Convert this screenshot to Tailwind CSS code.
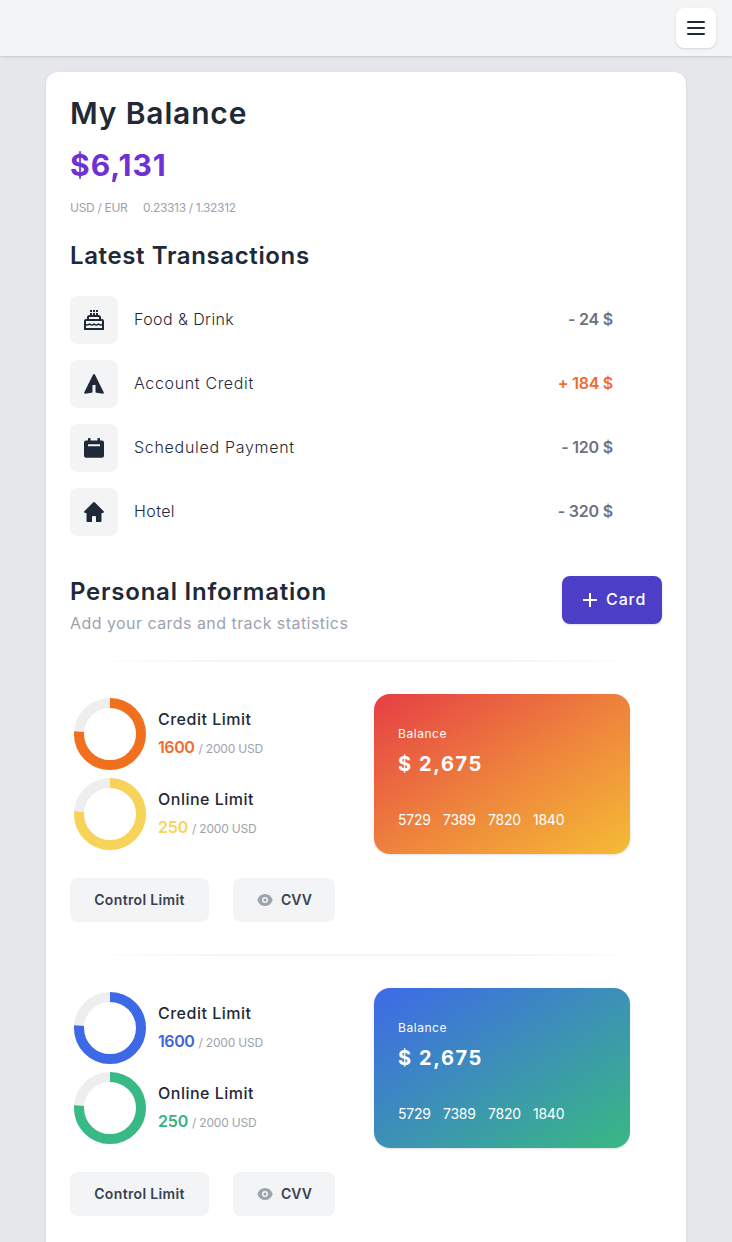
<!DOCTYPE html>
<html lang="en">
<head>
<meta charset="utf-8">
<meta name="viewport" content="width=device-width, initial-scale=1">
<title>My Balance</title>
<script src="https://cdn.jsdelivr.net/npm/@tailwindcss/browser@4"></script>
</head>
<body class="h-[1242px] overflow-hidden bg-[#e5e7eb] font-[Inter,sans-serif] text-[#1f2937]">
<header class="flex h-14 items-center justify-end bg-[#f3f4f6] px-4 shadow">
  <button class="flex size-10 items-center justify-center rounded-lg bg-white shadow">
    <svg class="size-6" viewBox="0 0 24 24" fill="none" stroke="#1f2937" stroke-width="2" stroke-linecap="round"><path d="M4 6h16M4 12h16M4 18h16"/></svg>
  </button>
</header>
<main class="mx-auto mt-4 h-[1170px] w-[640px] rounded-t-xl bg-white p-6 shadow">
  <h1 class="-mt-px text-[30px] leading-9 font-semibold tracking-[0.85px] whitespace-nowrap">My Balance</h1>
  <p class="mt-4 text-[30px] leading-9 font-bold tracking-[1px] text-[#6d31d4]">$6,131</p>
  <div class="mt-[17px] flex gap-4 text-xs leading-4 text-[#9ca3af]">
    <span class="w-[57px] tracking-[-0.3px] whitespace-nowrap">USD / EUR</span><span class="tracking-[-0.35px]">0.23313 / 1.32312</span>
  </div>
  <h2 class="mt-6 text-2xl leading-8 font-semibold tracking-[0.62px]">Latest Transactions</h2>
  <ul class="mt-6 flex flex-col gap-4 pr-[49px]">
    <li class="flex items-center">
      <span class="flex size-12 items-center justify-center rounded-lg bg-[#f3f4f6]">
        <svg class="size-6" viewBox="0 0 24 24" fill="none" stroke="#1f2937" stroke-width="2"><path d="M3 21V13q0-1 1-1h16q1 0 1 1v8zM6 12v-2.500Q6 8 7.500 8h9q1.500 0 1.500 1.500V12M9 5v3M12 5v3M15 5v3M9 2v2M12 2v2M15 2v2"/><path stroke-width="1.500" d="M3 16q2.250 2 4.500 0 2.250 2 4.500 0 2.250 2 4.500 0 2.250 2 4.500 0"/></svg>
      </span>
      <span class="-mt-0.5 ml-4 font-light tracking-[0.4px]">Food &amp; Drink</span><span class="-mt-0.5 ml-auto font-semibold tracking-[-0.2px] text-[#6b7280]">- 24 $</span>
    </li>
    <li class="flex items-center">
      <span class="flex size-12 items-center justify-center rounded-lg bg-[#f3f4f6]">
        <svg class="size-6" viewBox="0 0 24 24" fill="#1f2937"><path d="M12.900 2.600q-.9-1.200-1.800 0L2.200 20.500q-.3 1.100.8 1.300l6.500-1q1-.2 1-1V13h3v6.800q0 .8 1 1l6.500 1q1.100-.2.800-1.300z"/></svg>
      </span>
      <span class="-mt-0.5 ml-4 font-light tracking-[0.65px]">Account Credit</span><span class="-mt-0.5 ml-auto font-semibold tracking-[-0.25px] text-[#f26a2e]">+ 184 $</span>
    </li>
    <li class="flex items-center">
      <span class="flex size-12 items-center justify-center rounded-lg bg-[#f3f4f6]">
        <svg class="size-6" viewBox="0 0 24 24" fill="#1f2937"><path fill-rule="evenodd" d="M6 4.500V2.800q0-.8.800-.8h.9q.8 0 .8.800v1.700h7V2.800q0-.8.800-.8h.9q.8 0 .8.800v1.700H20q2 0 2 2v13.200q0 2-2 2H4q-2 0-2-2V6.500q0-2 2-2zM6 8.300v2h12v-2z"/></svg>
      </span>
      <span class="-mt-0.5 ml-4 font-light tracking-[0.7px]">Scheduled Payment</span><span class="-mt-0.5 ml-auto font-semibold tracking-[-0.2px] text-[#6b7280]">- 120 $</span>
    </li>
    <li class="flex items-center">
      <span class="flex size-12 items-center justify-center rounded-lg bg-[#f3f4f6]">
        <svg class="size-6" viewBox="0 0 24 24" fill="#1f2937"><path d="m12.700 2.300 9 9q.6.700-.5 1.700h-1.700v8q0 1-1 1H14v-5q0-1-1-1h-2q-1 0-1 1v5H5.500q-1 0-1-1v-8H2.800q-1.100-1-.5-1.700l9-9q.7-.6 1.400 0z"/></svg>
      </span>
      <span class="-mt-0.5 ml-4 font-light tracking-[0.4px]">Hotel</span><span class="-mt-0.5 ml-auto font-semibold tracking-[-0.2px] text-[#6b7280]">- 320 $</span>
    </li>
  </ul>
  <section class="mt-10 flex items-start justify-between">
    <div>
      <h2 class="text-2xl leading-8 font-semibold tracking-[0.77px]">Personal Information</h2>
      <p class="mt-[3px] mb-px leading-6 tracking-[0.45px] text-[#9ca3af]">Add your cards and track statistics</p>
    </div>
    <button class="flex h-12 w-[100px] items-center rounded-lg bg-[#4c3ec6] pl-4 text-white shadow">
      <svg class="mr-1 size-6" viewBox="0 0 24 24" fill="none" stroke="#fff" stroke-width="2"><path d="M12 5v14M5 12h14"/></svg>
      <span class="-mt-0.5 font-medium tracking-[0.9px]">Card</span>
    </button>
  </section>
  <hr class="mt-6 h-0.5 border-0 bg-[linear-gradient(90deg,#fff_2%,#f4f4f5_28%,#f4f4f5_72%,#fff_98%)]">
  <section class="mt-8 flex h-40">
    <div class="flex w-[304px] flex-col gap-2 py-1 pl-1">
      <div class="flex h-[72px]">
        <svg class="size-[72px]" viewBox="0 0 72 72" fill="none" stroke-width="10"><circle cx="36" cy="36" r="31" stroke="#eee"/><circle cx="36" cy="36" r="31" stroke="#f07020" pathLength="100" stroke-dasharray="76.2 100" transform="rotate(-90 36 36)"/></svg>
        <div class="ml-3 pt-[9px]">
          <h3 class="leading-6 font-medium tracking-[0.5px]">Credit Limit</h3>
          <p class="mt-1 leading-6 whitespace-nowrap"><span class="font-semibold tracking-[-0.4px] text-[#f26a2e]">1600</span><span class="ml-1 text-xs tracking-[-0.2px] text-[#9ca3af]">/ 2000 USD</span></p>
        </div>
      </div>
      <div class="flex h-[72px]">
        <svg class="size-[72px]" viewBox="0 0 72 72" fill="none" stroke-width="10"><circle cx="36" cy="36" r="31" stroke="#eee"/><circle cx="36" cy="36" r="31" stroke="#f8d35a" pathLength="100" stroke-dasharray="76.2 100" transform="rotate(-90 36 36)"/></svg>
        <div class="ml-3 pt-[9px]">
          <h3 class="leading-6 font-medium tracking-[0.5px]">Online Limit</h3>
          <p class="mt-1 leading-6 whitespace-nowrap"><span class="font-semibold tracking-[-0.2px] text-[#f8d35a]">250</span><span class="ml-1 text-xs tracking-[-0.2px] text-[#9ca3af]">/ 2000 USD</span></p>
        </div>
      </div>
    </div>
    <div class="h-40 w-64 rounded-2xl bg-[linear-gradient(to_bottom_right,#e53e45,#ee813d_50%,#f5bc35)] px-6 pt-8 text-white shadow">
      <p class="text-xs leading-4 tracking-[0.55px]">Balance</p>
      <p class="mt-2 text-xl leading-7 font-bold tracking-[1.6px]">$ 2,675</p>
      <p class="mt-8 flex gap-3 text-sm leading-5 tracking-[-0.25px]"><span class="w-[33px]">5729</span><span class="w-[33px]">7389</span><span class="w-[33px]">7820</span><span>1840</span></p>
    </div>
  </section>
  <div class="mt-6 flex gap-6 text-sm font-semibold text-[#374151]">
    <button class="h-11 w-[139px] rounded-lg bg-[#f3f4f6] tracking-[0.35px] whitespace-nowrap">Control Limit</button>
    <button class="flex h-11 w-[102px] items-center rounded-lg bg-[#f3f4f6] pl-6">
      <svg class="mr-2 size-4" viewBox="0 0 16 16"><path fill="#9ca3af" d="M.300 8Q2.500 2 8 2t7.700 6Q13.500 14 8 14T.300 8z"/><circle cx="8" cy="8" r="2.300" fill="#9ca3af" stroke="#f3f4f6" stroke-width="1.500"/></svg>CVV
    </button>
  </div>
  <hr class="mt-8 h-0.5 border-0 bg-[linear-gradient(90deg,#fff_2%,#f4f4f5_28%,#f4f4f5_72%,#fff_98%)]">
  <section class="mt-8 flex h-40">
    <div class="flex w-[304px] flex-col gap-2 py-1 pl-1">
      <div class="flex h-[72px]">
        <svg class="size-[72px]" viewBox="0 0 72 72" fill="none" stroke-width="10"><circle cx="36" cy="36" r="31" stroke="#eee"/><circle cx="36" cy="36" r="31" stroke="#3e69e6" pathLength="100" stroke-dasharray="76.2 100" transform="rotate(-90 36 36)"/></svg>
        <div class="ml-3 pt-[9px]">
          <h3 class="leading-6 font-medium tracking-[0.5px]">Credit Limit</h3>
          <p class="mt-1 leading-6 whitespace-nowrap"><span class="font-semibold tracking-[-0.4px] text-[#3e62df]">1600</span><span class="ml-1 text-xs tracking-[-0.2px] text-[#9ca3af]">/ 2000 USD</span></p>
        </div>
      </div>
      <div class="flex h-[72px]">
        <svg class="size-[72px]" viewBox="0 0 72 72" fill="none" stroke-width="10"><circle cx="36" cy="36" r="31" stroke="#eee"/><circle cx="36" cy="36" r="31" stroke="#38b985" pathLength="100" stroke-dasharray="76.2 100" transform="rotate(-90 36 36)"/></svg>
        <div class="ml-3 pt-[9px]">
          <h3 class="leading-6 font-medium tracking-[0.5px]">Online Limit</h3>
          <p class="mt-1 leading-6 whitespace-nowrap"><span class="font-semibold tracking-[-0.2px] text-[#38b27e]">250</span><span class="ml-1 text-xs tracking-[-0.2px] text-[#9ca3af]">/ 2000 USD</span></p>
        </div>
      </div>
    </div>
    <div class="h-40 w-64 rounded-2xl bg-[linear-gradient(to_bottom_right,#3e69e9,#3c91b6_50%,#38b982)] px-6 pt-8 text-white shadow">
      <p class="text-xs leading-4 tracking-[0.55px]">Balance</p>
      <p class="mt-2 text-xl leading-7 font-bold tracking-[1.6px]">$ 2,675</p>
      <p class="mt-8 flex gap-3 text-sm leading-5 tracking-[-0.25px]"><span class="w-[33px]">5729</span><span class="w-[33px]">7389</span><span class="w-[33px]">7820</span><span>1840</span></p>
    </div>
  </section>
  <div class="mt-6 flex gap-6 text-sm font-semibold text-[#374151]">
    <button class="h-11 w-[139px] rounded-lg bg-[#f3f4f6] tracking-[0.35px] whitespace-nowrap">Control Limit</button>
    <button class="flex h-11 w-[102px] items-center rounded-lg bg-[#f3f4f6] pl-6">
      <svg class="mr-2 size-4" viewBox="0 0 16 16"><path fill="#9ca3af" d="M.300 8Q2.500 2 8 2t7.700 6Q13.500 14 8 14T.300 8z"/><circle cx="8" cy="8" r="2.300" fill="#9ca3af" stroke="#f3f4f6" stroke-width="1.500"/></svg>CVV
    </button>
  </div>
</main>
</body>
</html>
